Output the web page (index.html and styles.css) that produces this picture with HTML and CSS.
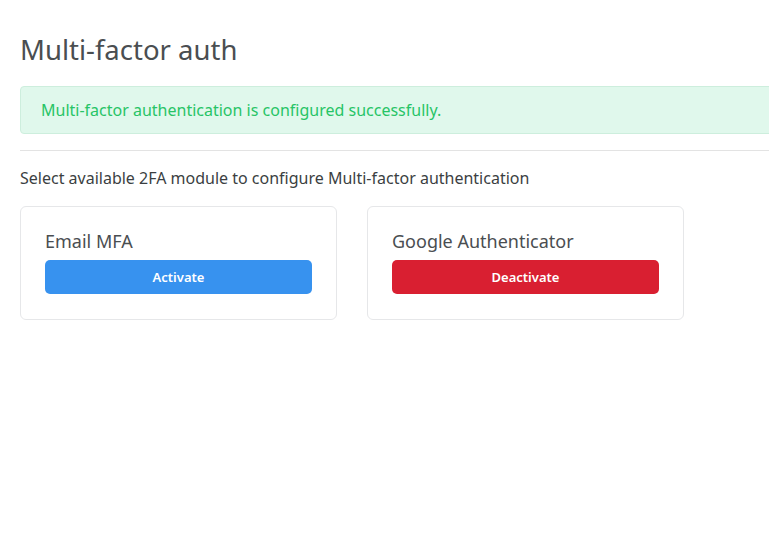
FILE: index.html
```html
<!DOCTYPE html>
<html>
<head>
<meta charset="utf-8">
<link rel="stylesheet" href="styles.css">
</head>
<body>
<div class="page">
  <h1 class="title">Multi-factor auth</h1>
  <div class="alert">Multi-factor authentication is configured successfully.</div>
  <hr class="divider">
  <p class="lead">Select available 2FA module to configure Multi-factor authentication</p>
  <div class="cards">
    <div class="card">
      <div class="card-title">Email MFA</div>
      <button class="btn btn-blue">Activate</button>
    </div>
    <div class="card">
      <div class="card-title">Google Authenticator</div>
      <button class="btn btn-red">Deactivate</button>
    </div>
  </div>
</div>
</body>
</html>
```
FILE: styles.css
```css
html, body {
  margin: 0;
  padding: 0;
  background: #fff;
  overflow: hidden;
}
body {
  font-family: "Noto Sans", "Open Sans", sans-serif;
  color: #4b4f52;
}
.page {
  width: 780px;
  padding: 34px 0 0 20px;
}
.title {
  margin: 0;
  font-size: 27.5px;
  font-weight: 400;
  line-height: 32px;
  color: #4a4e51;
}
.alert {
  margin-top: 20px;
  height: 48px;
  box-sizing: border-box;
  padding: 0 20px;
  display: flex;
  align-items: center;
  background: #e0f8ec;
  border: 1px solid #cdeedd;
  border-radius: 4px;
  color: #27c466;
  font-size: 16px;
}
.divider {
  margin: 16px 0 0;
  border: 0;
  border-top: 1px solid #e3e3e3;
}
.lead {
  margin: 17px 0 0;
  font-size: 16px;
  line-height: 21px;
  color: #3b3f42;
}
.cards {
  margin-top: 17px;
  display: flex;
  gap: 30px;
}
.card {
  width: 317px;
  height: 114px;
  box-sizing: border-box;
  border: 1px solid #e6e7e9;
  border-radius: 6px;
  padding: 23px 24px 0;
}
.card-title {
  font-size: 18px;
  line-height: 22px;
  color: #4a4e51;
}
.btn {
  margin-top: 8px;
  width: 267px;
  height: 34px;
  border: 0;
  border-radius: 5px;
  color: #fff;
  font-family: inherit;
  font-size: 13px;
  font-weight: 600;
  display: block;
}
.btn-blue { background: #3792ef; }
.btn-red { background: #d91f31; }
```
